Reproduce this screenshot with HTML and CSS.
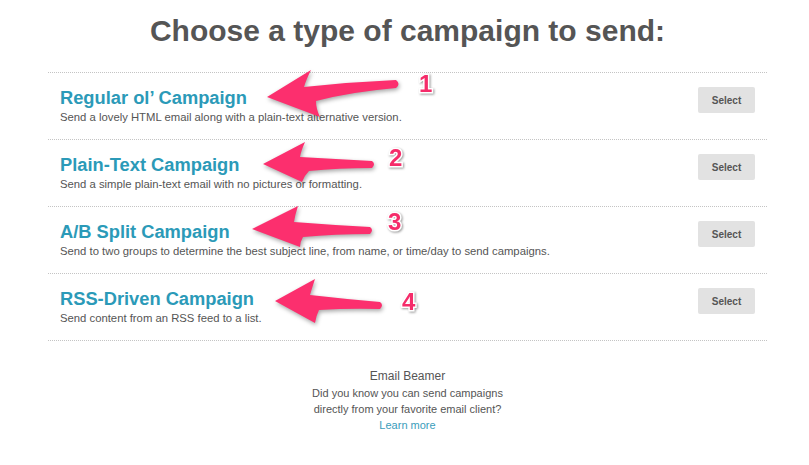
FILE: index.html
```html
<!DOCTYPE html>
<html>
<head>
<meta charset="utf-8">
<link rel="stylesheet" href="styles.css">
</head>
<body>
<div class="page">
  <h1 class="heading">Choose a type of campaign to send:</h1>
  <ul class="types">
    <li class="type">
      <div class="type-text">
        <h2 class="type-title">Regular ol’ Campaign</h2>
        <p class="type-desc">Send a lovely HTML email along with a plain-text alternative version.</p>
      </div>
      <button class="select-btn">Select</button>
    </li>
    <li class="type">
      <div class="type-text">
        <h2 class="type-title">Plain-Text Campaign</h2>
        <p class="type-desc">Send a simple plain-text email with no pictures or formatting.</p>
      </div>
      <button class="select-btn">Select</button>
    </li>
    <li class="type">
      <div class="type-text">
        <h2 class="type-title">A/B Split Campaign</h2>
        <p class="type-desc">Send to two groups to determine the best subject line, from name, or time/day to send campaigns.</p>
      </div>
      <button class="select-btn">Select</button>
    </li>
    <li class="type">
      <div class="type-text">
        <h2 class="type-title">RSS-Driven Campaign</h2>
        <p class="type-desc">Send content from an RSS feed to a list.</p>
      </div>
      <button class="select-btn">Select</button>
    </li>
  </ul>
  <div class="beamer">
    <h3 class="beamer-title">Email Beamer</h3>
    <p class="beamer-text">Did you know you can send campaigns<br>directly from your favorite email client?<br><a class="beamer-link" href="#">Learn more</a></p>
  </div>
</div>
<svg class="annotations" width="809" height="465" viewBox="0 0 809 465">
  <g class="arrows">
    <path d="M267,97 L311,70 Q306,80 304,87 Q350,82 396,80 Q401,84 396,88 Q350,92 316,101 Q316,109 320,117 Z"/>
    <path d="M263,164 L305,142 Q301,151 300,157 Q336,159 372,161 Q376,164 372,168 Q338,168 309,171 Q304,176 302,182 Z"/>
    <path d="M252,229 L298,206 Q295,215 294,222 Q332,225 370,227 Q374,230 370,234 Q335,234 303,237 Q300,242 300,247 Z"/>
    <path d="M275,301 L315,279 Q312,288 310,295 Q345,299 380,302 Q384,305 380,309 Q350,308 319,310 Q316,316 315,323 Z"/>
  </g>
  <g class="nums">
    <text x="419" y="92">1</text>
    <text x="389" y="166">2</text>
    <text x="388" y="230">3</text>
    <text x="402" y="310">4</text>
  </g>
</svg>
</body>
</html>
```

FILE: styles.css
```css
html, body {
  margin: 0;
  padding: 0;
  background: #ffffff;
}
body {
  font-family: "Liberation Sans", Arial, Helvetica, sans-serif;
  color: #555555;
  width: 809px;
  height: 465px;
  overflow: hidden;
  position: relative;
}
.page {
  padding: 13px 42px 0 48px;
}
.heading {
  margin: 0;
  font-size: 30px;
  line-height: 36px;
  font-weight: bold;
  text-align: center;
  color: #555555;
  padding-bottom: 23px;
}
.types {
  list-style: none;
  margin: 0;
  padding: 0;
  border-top: 1px dotted #c4c4c4;
}
.type {
  display: flex;
  justify-content: space-between;
  align-items: flex-start;
  height: 66px;
  border-bottom: 1px dotted #c4c4c4;
  padding: 0 12px;
}
.type-text {
  padding-top: 14px;
}
.type-title {
  margin: 0;
  font-size: 18.3px;
  line-height: 22px;
  font-weight: bold;
  color: #2b9ab8;
}
.type-desc {
  margin: 1px 0 0;
  font-size: 11.3px;
  line-height: 14px;
  color: #555555;
}
.select-btn {
  margin-top: 14px;
  width: 57px;
  height: 26px;
  border: none;
  border-radius: 2px;
  background: #e2e2e2;
  color: #555555;
  font-family: "Liberation Sans", Arial, sans-serif;
  font-size: 10px;
  font-weight: bold;
  padding: 0;
}
.beamer {
  text-align: center;
  padding-top: 27px;
}
.beamer-title {
  margin: 0;
  font-size: 12px;
  line-height: 16px;
  font-weight: normal;
  color: #555555;
}
.beamer-text {
  margin: 1px 0 0;
  font-size: 11px;
  line-height: 16px;
  color: #555555;
}
.beamer-link {
  color: #3a9dbb;
  text-decoration: none;
}
.annotations {
  position: absolute;
  left: 0;
  top: 0;
  pointer-events: none;
}
.arrows path {
  fill: #fc2f6e;
  filter: drop-shadow(1px 2px 2px rgba(0, 0, 0, 0.35));
}
.nums text {
  font-family: "Liberation Sans", Arial, sans-serif;
  font-size: 24px;
  font-weight: bold;
  fill: #f52c6a;
  stroke: #ffffff;
  stroke-width: 3px;
  paint-order: stroke;
  filter: drop-shadow(1px 1px 1px rgba(0, 0, 0, 0.4));
}
```
